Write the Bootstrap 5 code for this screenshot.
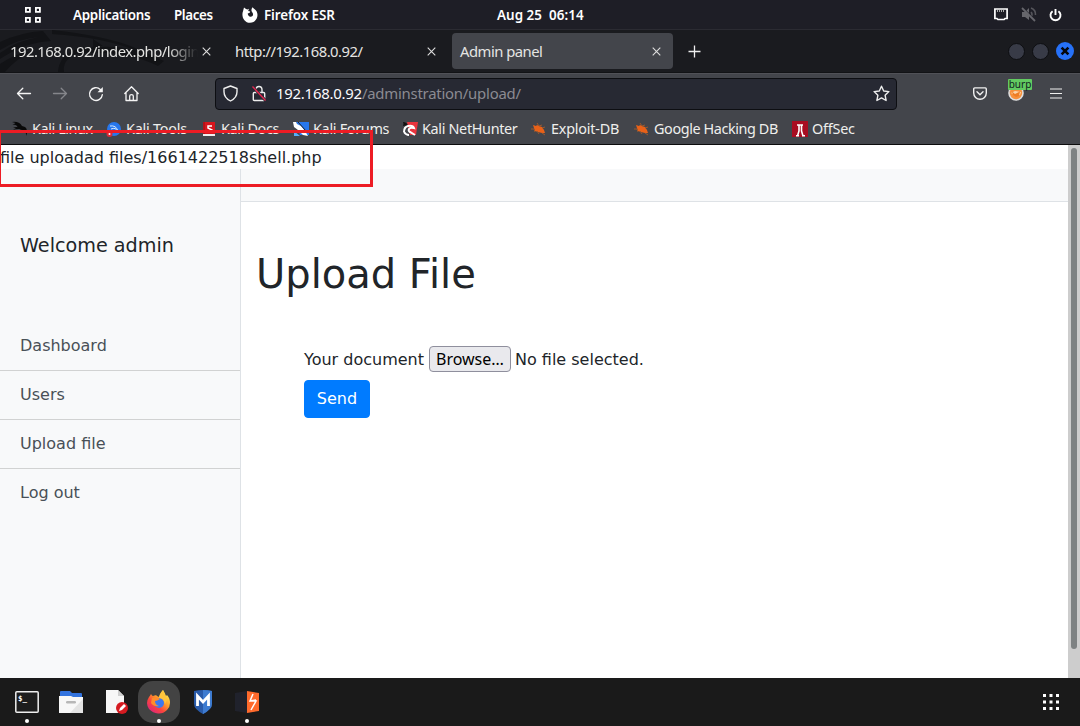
<!DOCTYPE html>
<html lang="en">
<head>
<meta charset="utf-8">
<meta name="viewport" content="width=device-width, initial-scale=1">
<title>Admin panel</title>
<link href="https://cdn.jsdelivr.net/npm/bootstrap@5.3.0/dist/css/bootstrap.min.css" rel="stylesheet">
<style>
body{width:1080px;height:726px;overflow:hidden;background:#fff;color:#212529;font-family:"DejaVu Sans",sans-serif;font-size:16px;line-height:24px}
svg{display:block;flex:none}
.desk{font-family:"Noto Sans","Open Sans",sans-serif;white-space:nowrap}
.topbar{height:30px;background:#1e1e26;border-bottom:1px solid #2b2b32;color:#fff;font-size:13.4px;font-weight:600;letter-spacing:-.1px}
.topbar .clock{white-space:pre;width:497px;letter-spacing:.05px}
.tabstrip{height:43px;background:#1a1b1f;color:#e4e4e2;font-size:14.8px;letter-spacing:-.5px;border-bottom:1px solid #121316}
.dragon{left:0;top:0}
.tab-a{width:227px;padding-left:10px}
.tab-b{width:225px;padding-left:8px}
.tab-c{width:221px;height:36px;margin-top:3px;padding-left:8px;background:#43454b;border-radius:4px}
.tab-a .ttl{width:188px;-webkit-mask-image:linear-gradient(90deg,#000 84%,transparent);mask-image:linear-gradient(90deg,#000 84%,transparent)}
.winbtn{width:17px;height:17px;border-radius:50%;background:#383b47;border:1px solid #0d0e11}
.toolbar{height:41px;background:#43454b;border-top:1px solid #505157}
.url{width:682px;height:32px;background:#272933;border:1px solid #0d0e12;border-radius:4px;color:#fbfbfe;font-size:14.9px;letter-spacing:-.23px}
.url .addr{margin:0 0 2px 9px}
.url .path{color:#8b8b92}
.burp{left:0;top:-6px;width:24px;height:11px;background:#62cb61;color:#122;font:10px/11px "Noto Sans",sans-serif;text-align:center;border-radius:1px}
.bookmarks{height:31px;background:#43454b;border-bottom:1px solid #0c0c0d;color:#efefed;font-size:14.4px;letter-spacing:-.22px}
.bookmarks>div{gap:4px}
.page{height:533px}
.notice{height:24px;padding-top:1px}
.sidebar{width:241px;height:509px;background:#f8f9fa;border-right:1px solid #dee2e6}
.heading{font-size:19.2px;line-height:28.8px;padding:63px 20px 61px}
.sidebar .list-group-item{padding:12px 20px;background:#f8f9fa;color:#495057;border-color:rgba(0,0,0,.155)}
.pagenav{height:33px;background:#f8f9fa;border-bottom:1px solid #dee2e6}
.title{font-size:40px;line-height:48px;margin:48px 0 0 15px;font-weight:400}
.upform{margin:48px 0 0 63px}
.upform label,.upform .chosen{padding-top:2px}
.browse{height:26px;width:82px;margin:0 4px 0 5px;border:1px solid #8f8f9d;border-radius:4px;background:#e9e9ed;color:#000;font:16px/24px "Noto Sans",sans-serif;padding:0}
.send{background:#007bff;border-color:#007bff;color:#fff;border-radius:4px;width:66px;height:38px;padding:6px 0;margin-top:8px;line-height:24px}
.track{width:12px;background:#cdcdcd}
.thumb{width:6px;height:501px;margin:3px auto 0;border-radius:3px;background:#7e8283}
.redbox{left:-2px;top:130px;width:375px;height:57px;border:3px solid #ed1c24;z-index:5}
.dock{height:48px;background:#1a1a1a}
.app{width:44px;height:48px}
.app.on::after{content:"";position:absolute;left:20px;bottom:3px;width:4px;height:4px;border-radius:50%;background:#fff}
.app.cur::before{content:"";position:absolute;left:1px;top:3px;width:42px;height:42px;border-radius:15px;background:#434343}
.app svg{position:relative}
</style>
</head>
<body class="d-flex flex-column position-relative">

<header class="topbar desk d-flex align-items-center">
  <svg class="ms-4" width="18" height="18" fill="none" stroke="#fff" stroke-width="1.8"><path d="M1.9 1.9h4v4h-4zM11.9 1.9h4v4h-4zM1.9 11.9h4v4h-4zM11.9 11.9h4v4h-4z"/></svg>
  <span style="margin-left:31px;width:101px;letter-spacing:-.27px">Applications</span>
  <span style="width:68px;letter-spacing:-.4px">Places</span>
  <svg width="16" height="16" viewBox="0 0 16 16"><path fill="#fff" d="M2 .5 4 2l1.500.5L7 1.800 6.200 4l2 .5-.5 1.300-2 .8c.2 2.500 2 3.700 3.800 3 1.600-.7 2-2.200 1-3.800L9.600 4.300C9.200 2.500 9.700 1.200 10.800.300c.3 1.300 3 2.300 4 4.400C17 10 13.700 15.800 8 15.800S-1 9.500 1 4.200z"/></svg>
  <span style="margin-left:6px;width:233px">Firefox ESR</span>
  <span class="clock">Aug 25  06:14</span>
  <svg width="14" height="13" viewBox="0 0 14 13"><path d="M.9 1h12.200v9.500h-2l-1 1H3.900l-1-1h-2z" fill="none" stroke="#fff" stroke-width="1.700"/><path d="M3.500 2v2M5.500 2v2M7.500 2v2M9.500 2v2" stroke="#aaa"/></svg>
  <svg style="margin-left:13px" width="16" height="15" viewBox="0 0 16 15"><path d="M1 5h3l4-4v12l-4-3H1z" fill="#66666c"/><path d="M10 5q2 2 0 5M10 1q5 2 4.500 7" stroke="#55555b" stroke-width="1.600" fill="none"/><path d="m2 1 13 13" stroke="#1e1e26" stroke-width="1.500"/><path d="M1 1l13 13" stroke="#66666c" stroke-width="1.800"/></svg>
  <svg style="margin-left:12px" width="13" height="14" viewBox="0 0 13 14"><path d="M3.600 3.200a5 5 0 1 0 5.800 0M6.500 1v6" fill="none" stroke="#fff" stroke-width="1.900"/></svg>
</header>

<div class="tabstrip desk d-flex position-relative">
  <svg class="dragon position-absolute" width="230" height="42"><path fill="#121316" d="M0 12Q22 2 43 1L51 11Q26 12 0 29V23Q18 10 40 7Q20 8 0 20zM52 0Q106 6 133 17L164 31L158 36Q123 19 75 24Q62 31 64 42H58Q59 26 75 20Q112 13 137 21Q103 7 52 4zM93 9l10 7h-7l12 6-15-3zM0 34q18-12 30-12Q15 30 5 42H0z"/></svg>
  <div class="tab-a position-relative d-flex align-items-center"><span class="ttl">192.168.0.92/index.php/login/</span><svg style="margin-left:4px" width="9" height="9" stroke="#dedede" stroke-width="1.100"><path d="m.7.7 7.600 7.600m0-7.600L.7 8.300"/></svg></div>
  <div class="tab-b position-relative d-flex align-items-center"><span style="width:192px">http://192.168.0.92/</span><svg width="9" height="9" stroke="#dedede" stroke-width="1.100"><path d="m.7.7 7.600 7.600m0-7.600L.7 8.300"/></svg></div>
  <div class="tab-c d-flex align-items-center"><span style="width:192px">Admin panel</span><svg width="9" height="9" stroke="#dedede" stroke-width="1.100"><path d="m.7.7 7.600 7.600m0-7.600L.7 8.300"/></svg></div>
  <svg class="align-self-center" style="margin-left:15px" width="13" height="13" stroke="#eee" stroke-width="1.300"><path d="M6.500.5v12M.5 6.500h12"/></svg>
  <div class="d-flex align-items-center ms-auto" style="gap:7px;padding-right:6px">
    <i class="winbtn"></i><i class="winbtn"></i>
    <svg width="18" height="18"><circle cx="9" cy="9" r="9" fill="#2671f8"/><path d="m5.600 5.600 6.800 6.800m0-6.800-6.800 6.800" stroke="#05070d" stroke-width="2.600"/></svg>
  </div>
</div>

<div class="toolbar desk d-flex align-items-center">
  <svg style="margin-left:16px" width="16" height="16" fill="none" stroke="#f4f4f4" stroke-width="1.300" stroke-linecap="round" stroke-linejoin="round"><path d="M14.500 7.500H1.500M6.800 2.200 1.500 7.500l5.300 5.300"/></svg>
  <svg style="margin-left:20px" width="16" height="16" fill="none" stroke="#85868b" stroke-width="1.300" stroke-linecap="round" stroke-linejoin="round"><path d="M1.500 7.500h13M9.200 2.200l5.300 5.300-5.300 5.300"/></svg>
  <svg style="margin-left:20px" width="16" height="16" fill="none" stroke="#f4f4f4" stroke-width="1.400" stroke-linecap="round"><path d="M14.300 8.700A6.400 6.400 0 1 1 12.300 3.400L13.500 4.500"/><path d="M14.800 1v5.300H9.500z" fill="#f4f4f4" stroke="none"/></svg>
  <svg style="margin-left:20px" width="16" height="16" fill="none" stroke="#f4f4f4" stroke-width="1.300" stroke-linejoin="round" stroke-linecap="round"><path d="M.8 7.500 7.500.8l6.700 6.700M2 6.500v8h11v-8M5.700 14v-4q0-1.300 1.800-1.300T9.300 10v4"/></svg>
  <div class="url d-flex align-items-center" style="margin-left:75px">
    <svg style="margin:0 0 1px 7px" width="15" height="17" fill="none" stroke="#eee" stroke-width="1.400" stroke-linejoin="round"><path d="m7.500 1 6.500 2.500v3.200q0 6-6.500 9.300Q1 12.700 1 6.700V3.500z"/></svg>
    <svg style="margin:0 0 1px 13px" width="16" height="17" fill="none"><path d="M5 7V4.800Q5 1.500 8 1.500t3 3.300V7M3.300 7.500h9.400q1 0 1 1v6q0 1-1 1H3.300q-1 0-1-1v-6q0-1 1-1z" stroke="#eee" stroke-width="1.400"/><path d="m1.500 1.500 13 14" stroke="#272933" stroke-width="3"/><path d="m1.500 1.500 13 14" stroke="#e22850" stroke-width="1.400"/></svg>
    <span class="addr">192.168.0.92<span class="path">/adminstration/upload/</span></span>
    <svg class="ms-auto" style="margin:0 6px 2px 0" width="17" height="17" fill="none" stroke="#eee" stroke-width="1.400" stroke-linejoin="round"><path d="m8.500 1.200 2.200 4.800 5.200.6-3.800 3.600 1 5.300-4.600-2.600-4.600 2.600 1-5.300L1.100 6.600l5.200-.6z"/></svg>
  </div>
  <svg style="margin:0 0 2px 76px" width="14" height="13" fill="none" stroke="#f0f0f0" stroke-width="1.400" stroke-linecap="round" stroke-linejoin="round"><path d="M1.700.9h10.600q1 0 1 1V6a6.300 6.200 0 0 1-12.600 0V1.900q0-1 1-1zM4 4.800l3 2.900 3-2.900"/></svg>
  <div class="position-relative" style="margin:0 0 3px 21px;width:16px">
    <svg width="16" height="16" viewBox="0 0 16 16"><circle cx="8" cy="8" r="7" fill="#f7913c" stroke="#dedede" stroke-width="1.600"/><path d="m3 8 4-2 6 1-1 3-4 1z" fill="#fbd5ac"/><path d="M4 6.500 7 9l5-2.500-1 4.500-3 1-3-2z" fill="#ee7d25"/></svg>
    <span class="burp position-absolute">burp</span>
  </div>
  <svg style="margin:0 0 2px 26px" width="12" height="11" stroke="#f0f0f0" stroke-width="1.200"><path d="M0 1h12M0 5.500h12M0 10h12"/></svg>
</div>

<nav class="bookmarks desk d-flex align-items-center">
  <div class="d-flex align-items-center" style="margin-left:12px;width:94px"><svg width="16" height="16"><path d="M0 1q7-1 10 4l3 1q3 2 1.500 9-.5-5-4.500-6-4-1-5-4Q3 3 .5 4l3-2zM1 7q4-2 6 0l2 1Q4 7.500 1 9l3-2z" fill="#090909"/></svg><span style="letter-spacing:-.4px">Kali Linux</span></div>
  <div class="d-flex align-items-center" style="width:95px"><svg width="16" height="16"><circle cx="8" cy="8" r="7" fill="#2777ed"/><path d="M4 5q6-1 8 5M5 8q5-2 6 2" stroke="#d9eaff" fill="none"/><circle cx="3.500" cy="13" r="3" fill="#d82b36"/><circle cx="3.500" cy="13" r="1" fill="#fff"/></svg><span>Kali Tools</span></div>
  <div class="d-flex align-items-center" style="width:92px"><svg width="16" height="16"><path d="M2 1h12v12H2z" fill="#d6161d"/><path d="M2 13h12v2H2z" fill="#eee"/><path d="M3 1v12" stroke="#8f0e14"/><path d="M11 5H7v2l4 2v2H6" stroke="#fff" stroke-width="1.500" fill="none"/></svg><span style="letter-spacing:-.35px">Kali Docs</span></div>
  <div class="d-flex align-items-center" style="width:109px"><svg width="16" height="16"><path d="M3 1h13v13H7z" fill="#2777ed"/><path d="M0 1h3l1 2 4 2 4 5 3 5-5-1-5-5-4-3z" fill="#fff"/><path d="M1 10v5h6z" fill="#55aef8"/><path d="m5 1 8 9" stroke="#222"/></svg><span style="letter-spacing:-.3px">Kali Forums</span></div>
  <div class="d-flex align-items-center" style="width:129px"><svg width="16" height="16"><path d="M5 1h11l-2 13H8z" fill="#e9343d"/><path d="M1 1q4 0 5 4-3-1-5 0 1-2 0-4z" fill="#111"/><path d="M2 11q0-5 4-6 5-1 6 2-4-1-5 1-1 2 1 3l5 3M2 11q2 3 5 3" fill="none" stroke="#fff" stroke-width="2"/></svg><span style="letter-spacing:-.33px">Kali NetHunter</span></div>
  <div class="d-flex align-items-center" style="width:103px"><svg width="16" height="16"><path d="m2 4 3 1 1-1 2 1 3 1 2 3 1 3-3 0-4-1-3-1-1-3z" fill="#e96118"/><path d="m6 2 2 3 3-1M0 8h3l1 3M11 7l3-1M11 12l3 2M6 10l2 3" stroke="#9a592f" fill="none"/></svg><span>Exploit-DB</span></div>
  <div class="d-flex align-items-center" style="width:158px"><svg width="16" height="16"><path d="m2 4 3 1 1-1 2 1 3 1 2 3 1 3-3 0-4-1-3-1-1-3z" fill="#e96118"/><path d="m6 2 2 3 3-1M0 8h3l1 3M11 7l3-1M11 12l3 2M6 10l2 3" stroke="#9a592f" fill="none"/></svg><span style="letter-spacing:-.4px">Google Hacking DB</span></div>
  <div class="d-flex align-items-center"><svg width="16" height="16"><path d="M0 0h16v16H0z" fill="#a90d22"/><path d="M5 4h6M7 4v6l-1.500 5M9.500 4v6l1.500 5M4 14.700h3m3 0h3" fill="none" stroke="#fff" stroke-width="1.600"/></svg><span>OffSec</span></div>
</nav>

<main class="page d-flex">
  <div class="flex-grow-1">
    <div class="notice">file uploadad files/1661422518shell.php</div>
    <div class="d-flex">
      <aside class="sidebar">
        <div class="heading">Welcome admin</div>
        <div class="list-group list-group-flush">
          <a class="list-group-item">Dashboard</a>
          <a class="list-group-item">Users</a>
          <a class="list-group-item">Upload file</a>
          <a class="list-group-item">Log out</a>
        </div>
      </aside>
      <section class="flex-grow-1">
        <div class="pagenav"></div>
        <h1 class="title">Upload File</h1>
        <form class="upform">
          <div class="d-flex align-items-center"><label>Your document</label><button type="button" class="browse">Browse…</button><span class="chosen">No file selected.</span></div>
          <button type="button" class="btn send">Send</button>
        </form>
      </section>
    </div>
  </div>
  <div class="track"><div class="thumb"></div></div>
</main>

<footer class="dock d-flex align-items-center" style="padding-left:5px">
  <div class="app on position-relative d-flex align-items-center justify-content-center"><svg width="24" height="22"><rect x=".8" y=".8" width="22.400" height="20.400" rx="1" fill="#1d1d1d" stroke="#eee" stroke-width="1.500"/><text x="3" y="10" font-family="DejaVu Sans Mono" font-size="7.500" font-weight="bold" fill="#fff">$_</text></svg></div>
  <div class="app position-relative d-flex align-items-center justify-content-center"><svg width="24" height="24"><path d="M1 2q0-1 1-1h9l2 2h9q1 0 1 1v5H1z" fill="#3273df"/><path d="M0 6h12l2 1h10v16H0z" fill="#f7f7f7"/><path d="M24 9v14H11z" fill="#e3e3e3"/><rect x="7" y="11" width="10" height="2.500" rx="1.200" fill="#b7b7b7"/></svg></div>
  <div class="app position-relative d-flex align-items-center justify-content-center"><svg style="left:1px;top:-1px" width="24" height="26"><path d="M2 2h12l6 6v17H2z" fill="#f7f7f7"/><path d="M14 2v6h6z" fill="#cfcfcf"/><circle cx="18" cy="20" r="6" fill="#d51a20"/><path d="m15 23 1-3 4-4 2 2-4 4z" fill="#fff"/></svg></div>
  <div class="app on cur position-relative d-flex align-items-center justify-content-center">
    <svg style="top:-1px" width="24" height="25" viewBox="0 0 24 25"><defs><linearGradient id="fx" x1=".85" y1=".1" x2=".2" y2=".9"><stop stop-color="#ffe84a"/><stop offset=".4" stop-color="#ff9c2b"/><stop offset=".7" stop-color="#fb443d"/><stop offset="1" stop-color="#e22a72"/></linearGradient></defs><path d="M4 5q1 2 2 2l3-1q-1-1 1 1l2 1 2-4 2-3q2 3 3 6l1-1q3 3 3 8 0 4-3 7-4 4-9 3.500T2 20Q-2 14 2 8q1-1 2-3z" fill="url(#fx)"/><circle cx="12" cy="14" r="5" fill="#3e78ed"/><path d="M5 9q5-2 8 1-3 2-5 2 0 4 4 5-5 1-8-3z" fill="#ff8d2c"/><path d="M12 9q5 0 6 6l2-4-4-10q-4 4-4 8z" fill="#ffc43c"/></svg></div>
  <div class="app position-relative d-flex align-items-center justify-content-center"><svg style="top:0" width="20" height="24"><path d="M1 1q9-2 18 0v13q0 5-9 10-9-5-9-10z" fill="#295aa8"/><path d="M10 0q5 0 9 1v13q0 5-9 10z" fill="#3d7bd0"/><path d="M4.500 16V6L10 12l5.500-6v10" fill="none" stroke="#fff" stroke-width="2.800"/></svg></div>
  <div class="app on position-relative d-flex align-items-center justify-content-center"><svg width="24" height="24"><path d="m0 3 12-2v22L0 21z" fill="#20222c"/><path d="m12 1 12 2v18l-12 2z" fill="#ff6a2c"/><path d="m18 4-3 7h6l-5 9M15 11l6-1" stroke="#fff" stroke-width="1.500" fill="none"/></svg></div>
  <svg class="ms-auto" style="margin-right:20px" width="18" height="18" fill="#fff"><path d="M1 1h3v3H1zM7.500 1h3v3h-3zM14 1h3v3h-3zM1 7.500h3v3H1zM7.500 7.500h3v3h-3zM14 7.500h3v3h-3zM1 14h3v3H1zM7.500 14h3v3h-3zM14 14h3v3h-3z"/></svg>
</footer>

<div class="redbox position-absolute"></div>
<script src="https://cdn.jsdelivr.net/npm/bootstrap@5.3.0/dist/js/bootstrap.bundle.min.js"></script>
</body>
</html>
